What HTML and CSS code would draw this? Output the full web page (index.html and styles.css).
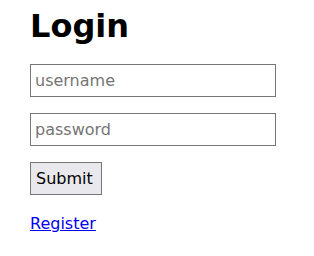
FILE: index.html
```html
<!DOCTYPE html>
<html>
<head>
<meta charset="utf-8">
<link rel="stylesheet" href="styles.css">
</head>
<body>
<main class="page">
  <h1 class="title">Login</h1>
  <form class="form">
    <input class="field" type="text" placeholder="username">
    <input class="field" type="password" placeholder="password">
    <div><button class="btn" type="button">Submit</button></div>
  </form>
  <a class="link" href="#">Register</a>
</main>
</body>
</html>
```
FILE: styles.css
```css
html, body {
  margin: 0;
  padding: 0;
  background: #fff;
}
body {
  font-family: "DejaVu Sans", sans-serif;
  font-size: 16px;
}
.page {
  padding: 8px 30px;
  display: flex;
  flex-direction: column;
  align-items: flex-start;
}
.title {
  font-size: 32px;
  font-weight: bold;
  margin: 0 0 19px 0;
  line-height: 37px;
}
.form {
  display: flex;
  flex-direction: column;
  gap: 16px;
  margin: 0 0 19px 0;
}
.field {
  box-sizing: border-box;
  width: 246px;
  height: 33px;
  padding: 6px 4px;
  font-family: "DejaVu Sans", sans-serif;
  font-size: 16px;
  border: 1px solid #767676;
  border-radius: 0;
  outline: none;
  color: #000;
}
.field::placeholder {
  color: #757575;
}
.btn {
  box-sizing: border-box;
  height: 33px;
  padding: 6px 8px 6px 5px;
  font-family: "DejaVu Sans", sans-serif;
  font-size: 16px;
  border: 1px solid #767676;
  border-radius: 0;
  background: #e9e9ed;
  color: #000;
}
.link {
  color: #0000ee;
  text-decoration: underline;
  font-size: 16px;
}
```
